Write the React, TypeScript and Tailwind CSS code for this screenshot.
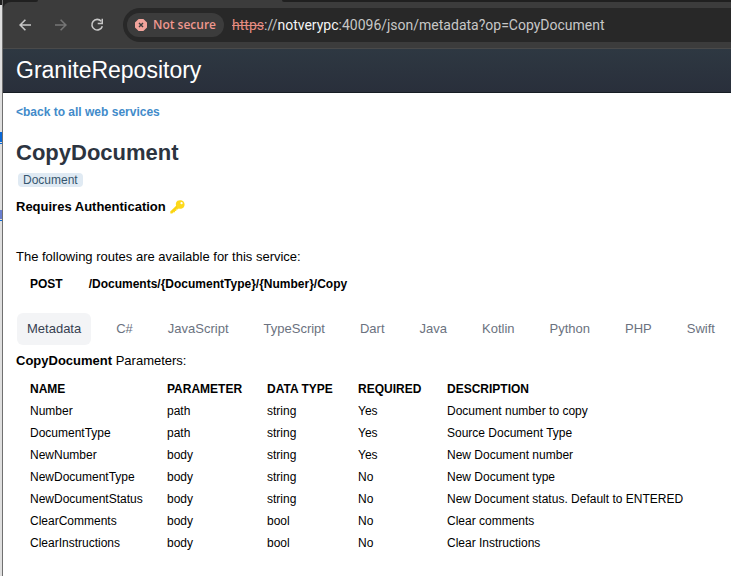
const tabs = ["C#", "JavaScript", "TypeScript", "Dart", "Java", "Kotlin", "Python", "PHP", "Swift"];

const columns = [
  { label: "NAME", width: "w-[137px]" },
  { label: "PARAMETER", width: "w-[100px]" },
  { label: "DATA TYPE", width: "w-[91px]" },
  { label: "REQUIRED", width: "w-[89px]" },
  { label: "DESCRIPTION", width: "" },
];

const rows = [
  ["Number", "path", "string", "Yes", "Document number to copy"],
  ["DocumentType", "path", "string", "Yes", "Source Document Type"],
  ["NewNumber", "body", "string", "Yes", "New Document number"],
  ["NewDocumentType", "body", "string", "No", "New Document type"],
  ["NewDocumentStatus", "body", "string", "No", "New Document status. Default to ENTERED"],
  ["ClearComments", "body", "bool", "No", "Clear comments"],
  ["ClearInstructions", "body", "bool", "No", "Clear Instructions"],
];

function ArrowIcon({ className }: { className: string }) {
  return (
    <svg viewBox="0 0 12 12" className={className} fill="none" stroke="currentColor" strokeWidth="1.6" aria-hidden="true">
      <path d="M12 6H1.2M6.4 .7 1.1 6l5.3 5.3" />
    </svg>
  );
}

function BrowserBar() {
  return (
    <div className="bg-[#202020] font-['Open_Sans','Noto_Sans',sans-serif]">
      <div className="flex h-[2px] rounded-tl-lg bg-[#3c3c3c]">
        <div className="w-[35px] rounded-br-lg bg-[#202020]" />
        <div className="w-[244px]" />
        <div className="flex-1 rounded-bl-lg bg-[#202020]" />
      </div>
      <div className="flex h-[47px] items-start rounded-tl-lg border-b border-[#4a4a4a] bg-[#3c3c3c] pt-[6px] pl-4">
        <div className="flex h-[34px] items-center gap-6">
          <button type="button" aria-label="Back">
            <ArrowIcon className="h-3 w-3 text-[#c7c7c7]" />
          </button>
          <button type="button" aria-label="Forward">
            <ArrowIcon className="h-3 w-3 rotate-180 text-[#757575]" />
          </button>
          <button type="button" aria-label="Reload">
            <svg viewBox="0 0 12 12" className="h-3 w-3 overflow-visible text-[#c7c7c7]" aria-hidden="true">
              <path d="M10.2 2.2A5.3 5.3 0 1 0 11.3 7.2" fill="none" stroke="currentColor" strokeWidth="1.6" />
              <path d="M12 -.2V5.2H6.7V3.7H10.5V-.2Z" fill="currentColor" />
            </svg>
          </button>
        </div>
        <div className="ml-5 flex h-[34px] flex-1 items-center rounded-l-full bg-[#282828] pl-1">
          <button
            type="button"
            className="flex h-6 items-center gap-1.5 rounded-full bg-[#3c3c3c] px-2 text-[12px] font-semibold whitespace-nowrap text-[#f0988f]"
          >
            <svg viewBox="0 0 12 12" className="h-3 w-3" aria-hidden="true">
              <path d="M3.6 0h4.8L12 3.6v4.8L8.4 12H3.6L0 8.4V3.6Z" fill="#f2a49c" />
              <path d="m4 4 4 4M8 4 4 8" stroke="#3c3c3c" strokeWidth="1.4" />
            </svg>
            Not secure
          </button>
          <div className="ml-2 font-[Roboto,sans-serif] text-[14px] leading-5 whitespace-nowrap text-[#c7c7c7]">
            <span className="text-[#e58c82] line-through">https</span>://<span className="text-[#f4f4f4]">notverypc</span>
            :40096/json/metadata?op=CopyDocument
          </div>
        </div>
      </div>
    </div>
  );
}

function KeyIcon() {
  return (
    <svg viewBox="0 0 15 14" className="h-[14px] w-[15px]" role="img" aria-label="key">
      <path
        fillRule="evenodd"
        d="M7.5.8C9.2-.3 12.3.1 13.5 1.5c1.3 1.5 1.5 4.200.2 5.700C12.600 8.600 10.500 9 8.800 8.400L7.500 9.600H6.300V11H5V12.200H3.600L2.300 13.500H.4L.2 11.600 6.100 5.800C5.500 4 6 1.900 7.500.8ZM11.500 2a1.100 1.100 0 1 0 .1 2.200A1.100 1.100 0 0 0 11.500 2Z"
        fill="#fdd91b"
      />
      <path d="M1.500 12 7 6.600" stroke="#edbd00" strokeWidth=".6" />
    </svg>
  );
}

export default function App() {
  return (
    <div className="flex min-h-screen bg-white font-['Liberation_Sans',Arial,sans-serif] text-[13px] leading-5 text-black">
      <div className="flex w-[3px] shrink-0 flex-col border-r border-[#707070] bg-[#dfdfdf]">
        <div className="h-[5px] bg-[#202020]" />
        <div className="mt-[127px] h-[10px] bg-[#0868d8]" />
        <div className="mt-px h-px bg-[#0868d8]" />
        <div className="mt-[66px] h-[9px] bg-[#6a7fd0]" />
        <div className="mt-px h-px bg-[#0868d8]" />
      </div>
      <div className="min-w-0 flex-1 overflow-hidden">
        <BrowserBar />
        <header className="h-11 border-b border-[#161d24] bg-linear-to-b from-[#2e3842] to-[#292f3b] px-[13px] text-[23px] leading-[42px] text-white">
          GraniteRepository
        </header>
        <main className="px-[13px]">
          <a href="#services" className="mt-[9px] block text-[12px] font-bold text-[#428bca]">
            &lt;back to all web services
          </a>
          <h1 className="mt-[15px] text-[22px] leading-8 font-bold text-[#2c3440]">CopyDocument</h1>
          <div className="mt-1 flex">
            <span className="ml-[2px] rounded-sm bg-[#e0eaf3] px-[5px] text-[12px] leading-[14px] text-[#36566f]">
              Document
            </span>
          </div>
          <div className="mt-2.5 flex items-center gap-1 font-bold">
            Requires Authentication
            <KeyIcon />
          </div>
          <p className="mt-[30px]">The following routes are available for this service:</p>
          <table className="mt-[7px] text-left text-[12px] font-bold">
            <tbody>
              <tr>
                <td className="pl-3.5">POST</td>
                <td className="pl-[26px]">/Documents/&#123;DocumentType&#125;/&#123;Number&#125;/Copy</td>
              </tr>
            </tbody>
          </table>
          <nav className="mt-[19px] ml-px flex gap-[15px] whitespace-nowrap text-[#6b7280]">
            <button type="button" className="rounded-md bg-[#f3f4f6] px-2.5 py-1.5 text-[#374151]">
              Metadata
            </button>
            {tabs.map((tab) => (
              <button key={tab} type="button" className="px-2.5 py-1.5">
                {tab}
              </button>
            ))}
          </nav>
          <p className="mt-1.5">
            <b>CopyDocument</b> Parameters:
          </p>
          <table className="mt-[7px] w-full table-fixed text-left text-[12px] leading-[22px] whitespace-nowrap">
            <thead>
              <tr>
                {columns.map((column) => (
                  <th key={column.label} className={`pl-3.5 ${column.width}`}>
                    {column.label}
                  </th>
                ))}
              </tr>
            </thead>
            <tbody>
              {rows.map((row) => (
                <tr key={row[0]}>
                  {row.map((cell, i) => (
                    <td key={columns[i].label} className="pl-3.5">
                      {cell}
                    </td>
                  ))}
                </tr>
              ))}
            </tbody>
          </table>
        </main>
      </div>
    </div>
  );
}
